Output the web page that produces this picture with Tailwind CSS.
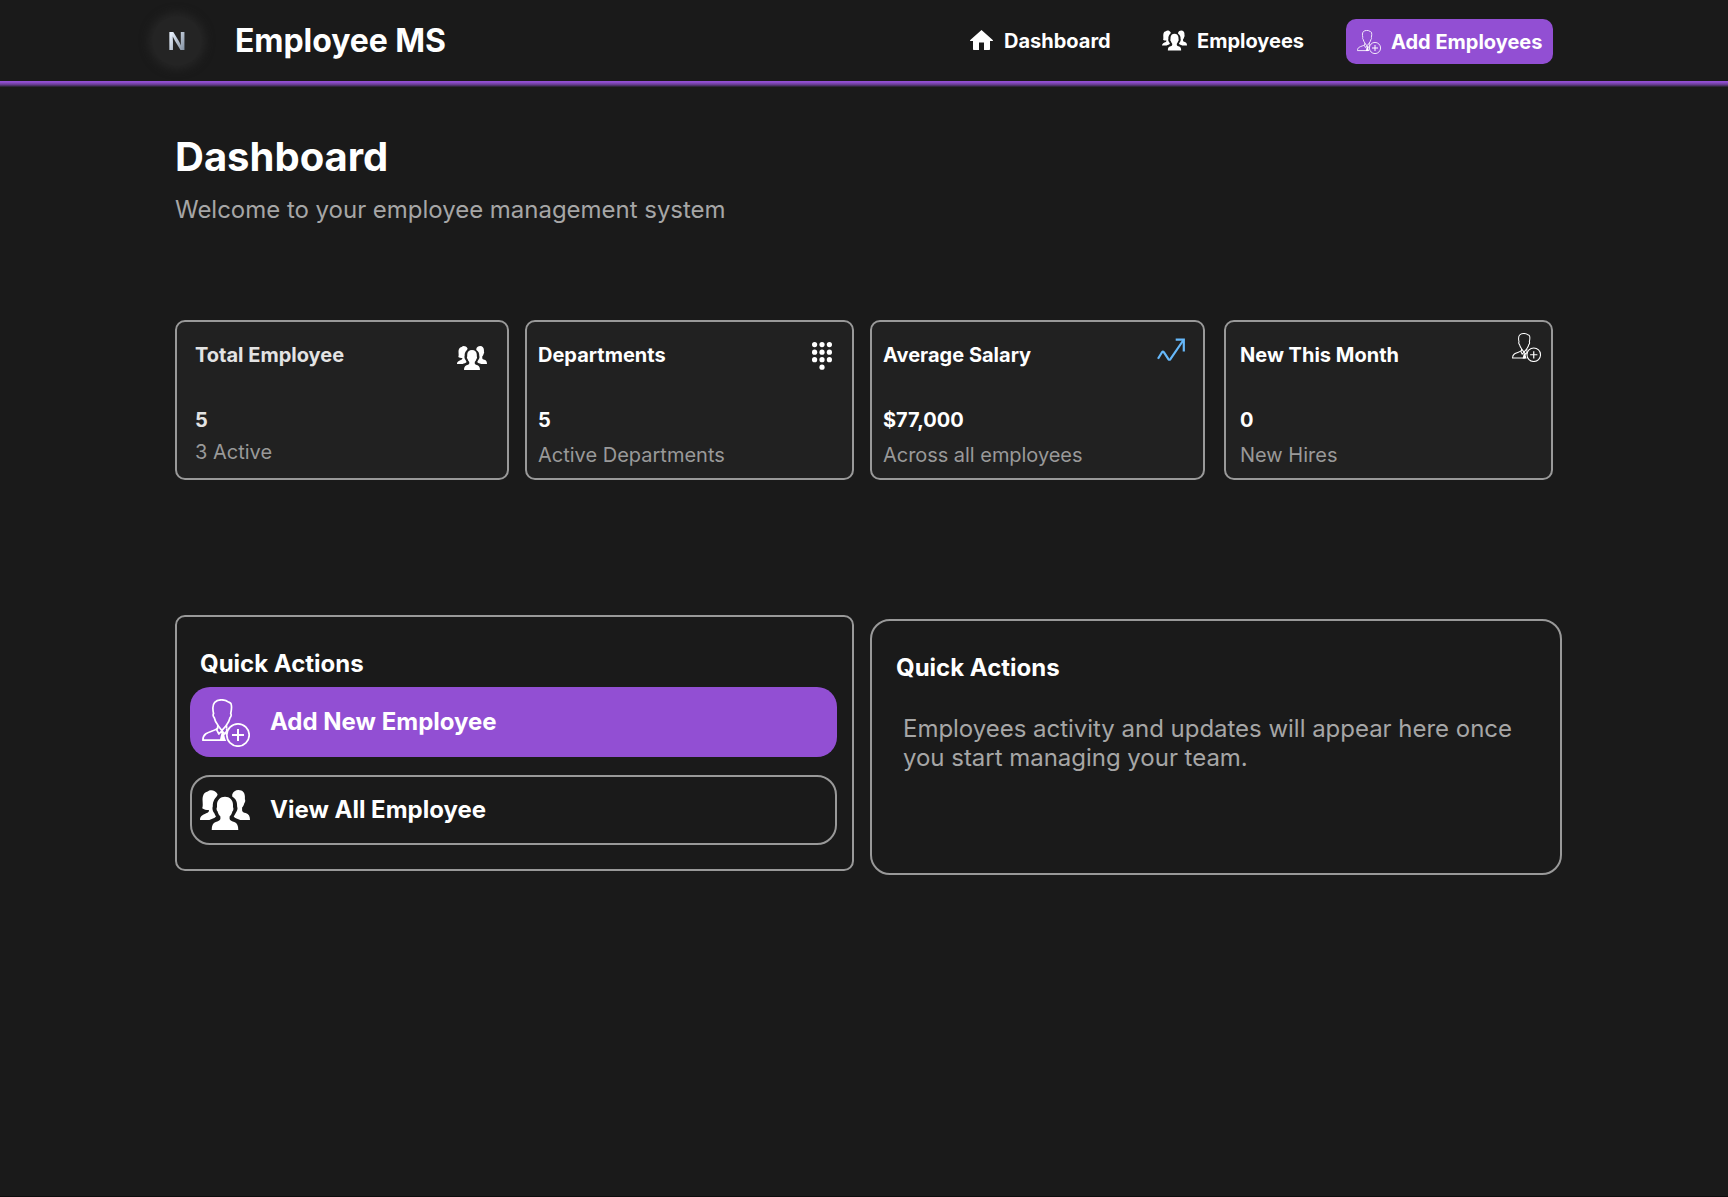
<!DOCTYPE html>
<html lang="en">
<head>
<meta charset="utf-8">
<title>Employee MS</title>
<script src="https://cdn.jsdelivr.net/npm/@tailwindcss/browser@4"></script>
</head>
<body class="bg-[#1a1a1a] font-['Inter',sans-serif] text-white">
<svg class="hidden">
  <symbol id="people" viewBox="0 0 50 40">
    <path d="M25 6.700c4.700 0 8 3.300 8 8v2.600c.8.700.5 3.300-.5 3.900-.7 2.500-1.700 4.100-2.900 5.300v2.600c.3 1.700 2.500 2.200 4.700 3 2.800 1 4 3.600 4 7.900H11.700c0-4.300 1.200-6.900 4-7.900 2.200-.8 4.400-1.300 4.700-3v-2.600c-1.200-1.200-2.200-2.800-2.900-5.300-1-.6-1.300-3.200-.5-3.900v-2.600c0-4.700 3.300-8 8-8z"/>
    <path d="M14.200 9.700c-1.400 2.800-1.500 4.800-1.400 6.600-1 2.600.4 5.700 1.400 6.800.6 1.500 1.200 2.400 1.800 3.400-1.500 2-4.300 2.100-6.700 3.500H0c0-4.800 4-5.600 7.500-7.200 1.200-.6 1.500-1.500 1.400-2.700-2.600 0-5.200-.4-6.700-1.800C3.600 14.500 1.700 10 3 6c.8-3.100 2.900-4.200 4.700-4.500C10-.9 15.400-.1 17.600 4.200c-.2 2.300-2.300 3.400-3.400 5.500z"/>
    <path d="M32.200 4.500C33.200 1.500 35.500 0 38.500 0c4.200 0 6.400 2.900 6.400 6.500v2.700c.6.800.4 3.200-.5 3.700-.6 2.400-1.300 3.500-2.300 4.600v2.900c.3 1.500 1.600 2 3.600 2.700C48.900 24.200 50 26.400 50 30h-9.800c-2.400-1.400-5.200-1.500-6.500-3.500.7-1.100 1.400-2 2-3.400 1.200-1.700 2.500-4.300 1.400-6.800.2-4-1-7.500-4.900-9.800z"/>
  </symbol>
  <symbol id="adduser" viewBox="0 0 48 48">
    <g fill="none" stroke="currentColor" stroke-width="1.700" stroke-linejoin="round">
      <path d="M24.600 29.300l-.1-3.300c1.700-2.200 3-4.700 3.600-7.500 1.100-.6 1.400-3 .6-3.800.9-4 1.200-7.600.3-10-.5-1.100-1.700-1.200-2.400-1.600C22.500-.1 16 .1 12.700 3.300c-2.100 2.200-2.200 6.600-1.100 11.400-.8.8-.5 3.200.6 3.800.6 2.800 1.900 5.300 3.600 7.500l-.1 3c-2.200 2.700-8.300 3.300-11.800 5.800C1.600 36.400.9 38.600.9 41.200H22"/>
      <path d="M15.700 29l-1 1.800 2.200 4.200 3-3.200 2.800 3.200 2.200-3.200-.3-2.500M15.800 26.300l4 5.300 4.700-5.300"/>
      <circle cx="36" cy="36" r="11.200"/>
      <path stroke-width="2" d="M36 30v12M30 36h12"/>
    </g>
    <path fill="currentColor" d="M19.600 33.500l2.600 1c.2 2.700.8 5.200 2 7.500h-6.600z"/>
  </symbol>
</svg>

<div class="flex h-[1197px] flex-col border-b border-[#0c0c0c]">
  <header class="flex h-[81px] shrink-0 items-start pl-[152px]">
    <div class="mt-4 flex size-[50px] items-center justify-center rounded-full bg-[#242424] shadow-[0_0_10px_3px_#272727]">
      <span class="bg-linear-to-br from-[#e6effc] from-20% to-[#8390a0] to-85% bg-clip-text text-2xl leading-[29px] font-bold text-transparent">N</span>
    </div>
    <h1 class="mt-[21px] ml-[33px] w-[735px] text-[32px] leading-[39px] font-bold tracking-[-0.002em]">Employee MS</h1>
    <a class="flex w-[192px] pt-[29px] text-xl leading-6 font-bold">
      <svg class="mt-px mr-[11px] h-5 w-[23px]" viewBox="0 0 23 20" fill="#fff"><path d="M11.500 0L23 10.300c.2.400 0 .7-.4.700H20v8c0 .6-.4 1-1 1h-5v-7.500H9V20H4c-.6 0-1-.4-1-1v-8H.4c-.4 0-.6-.3-.4-.7z"/></svg>
      Dashboard
    </a>
    <a class="flex w-[184px] pt-[29px] text-xl leading-6 font-bold">
      <svg class="mt-px mr-[10px] h-[21px] w-[25px]" fill="#fff"><use href="#people"/></svg>
      Employees
    </a>
    <button class="mt-[19px] flex h-[45px] w-[207px] items-center rounded-[10px] bg-[#924fd3] pl-[11px] text-xl leading-6 font-bold whitespace-nowrap">
      <svg class="mr-[10px] size-6 shrink-0"><use href="#adduser"/></svg>
      Add Employees
    </button>
  </header>
  <div class="h-[7px] shrink-0 bg-linear-to-b from-[#924fd3] from-15% via-[#633a8b] via-55% to-[#1a1a1a] to-90%"></div>

  <main class="pl-[175px]">
    <h2 class="mt-[45px] text-[40px] leading-[48px] font-bold">Dashboard</h2>
    <p class="mt-[14px] text-2xl leading-[29px] tracking-[-0.001em] text-[#a6a6a6]">Welcome to your employee management system</p>

    <section class="mt-24 flex h-40">
      <article class="flex w-[334px] justify-between rounded-[10px] border-2 border-[#999] bg-[#212121] pr-5 pl-[18px] text-xl leading-6">
        <div class="pt-[21px] font-bold text-[#e3e3e3]">
          <h3>Total Employee</h3>
          <p class="mt-[41px]">5</p>
          <p class="mt-2 font-normal text-[#999]">3 Active</p>
        </div>
        <svg class="mt-6 h-6 w-[30px]" fill="#fff"><use href="#people"/></svg>
      </article>
      <article class="ml-4 flex w-[329px] justify-between rounded-[10px] border-2 border-[#999] bg-[#212121] pr-5 pl-[11px] text-xl leading-6">
        <div class="pt-[21px] font-bold">
          <h3>Departments</h3>
          <p class="mt-[41px]">5</p>
          <p class="mt-[11px] font-normal text-[#999]">Active Departments</p>
        </div>
        <svg class="mt-5 h-7 w-5" viewBox="0 0 20 28" fill="#fff"><circle cx="2.600" cy="2.600" r="2.600"/><circle cx="10" cy="2.600" r="2.600"/><circle cx="17.400" cy="2.600" r="2.600"/><circle cx="2.600" cy="10.200" r="2.600"/><circle cx="10" cy="10.200" r="2.600"/><circle cx="17.400" cy="10.200" r="2.600"/><circle cx="2.600" cy="17.700" r="2.600"/><circle cx="10" cy="17.700" r="2.600"/><circle cx="17.400" cy="17.700" r="2.600"/><circle cx="10" cy="25.200" r="2.600"/></svg>
      </article>
      <article class="ml-4 flex w-[335px] justify-between rounded-[10px] border-2 border-[#999] bg-[#212121] pr-[18px] pl-[11px] text-xl leading-6">
        <div class="pt-[21px] font-bold">
          <h3>Average Salary</h3>
          <p class="mt-[41px]">$77,000</p>
          <p class="mt-[11px] font-normal tracking-[-0.002em] text-[#999]">Across all employees</p>
        </div>
        <svg class="mt-4 h-6 w-7" viewBox="0 0 28 24" fill="none" stroke="#66b8fa" stroke-width="2.200" stroke-linejoin="round"><path d="M1 20.800L5 14.200Q5.900 13.200 6.800 14.200L11.400 21.200Q12.400 22.300 13.400 21.200L26.500 2"/><path d="M18.700 1.600h8.100v12" stroke-linejoin="miter"/></svg>
      </article>
      <article class="ml-[19px] flex w-[329px] justify-between rounded-[10px] border-2 border-[#999] bg-[#212121] pr-[10px] pl-[14px] text-xl leading-6">
        <div class="pt-[21px] font-bold">
          <h3>New This Month</h3>
          <p class="mt-[41px]">0</p>
          <p class="mt-[11px] font-normal text-[#999]">New Hires</p>
        </div>
        <svg class="mt-[11px] size-[29px]"><use href="#adduser"/></svg>
      </article>
    </section>

    <section class="mt-[135px] flex">
      <div class="h-64 w-[679px] rounded-[10px] border-2 border-[#999] px-[13px] pt-8">
        <h3 class="pl-[10px] text-2xl leading-[29px] font-bold">Quick Actions</h3>
        <button class="mt-[9px] flex h-[70px] w-[647px] items-center rounded-[20px] bg-[#924fd3] pb-px pl-3 text-2xl leading-[29px] font-bold">
          <svg class="mt-[3px] mr-5 size-12"><use href="#adduser"/></svg>
          Add New Employee
        </button>
        <button class="mt-[18px] flex h-[70px] w-[647px] items-center rounded-[20px] border-2 border-[#999] pb-px pl-2 text-2xl leading-[29px] font-bold">
          <svg class="mr-5 h-10 w-[50px]" fill="#fff"><use href="#people"/></svg>
          View All Employee
        </button>
      </div>
      <div class="mt-1 ml-4 h-64 w-[692px] rounded-[20px] border-2 border-[#999] pt-8 pl-6">
        <h3 class="text-2xl leading-[29px] font-bold">Quick Actions</h3>
        <p class="mt-8 ml-[7px] text-2xl leading-[29px] tracking-[-0.001em] text-[#a6a6a6]">Employees activity and updates will appear here once<br>you start managing your team.</p>
      </div>
    </section>
  </main>
</div>
</body>
</html>
